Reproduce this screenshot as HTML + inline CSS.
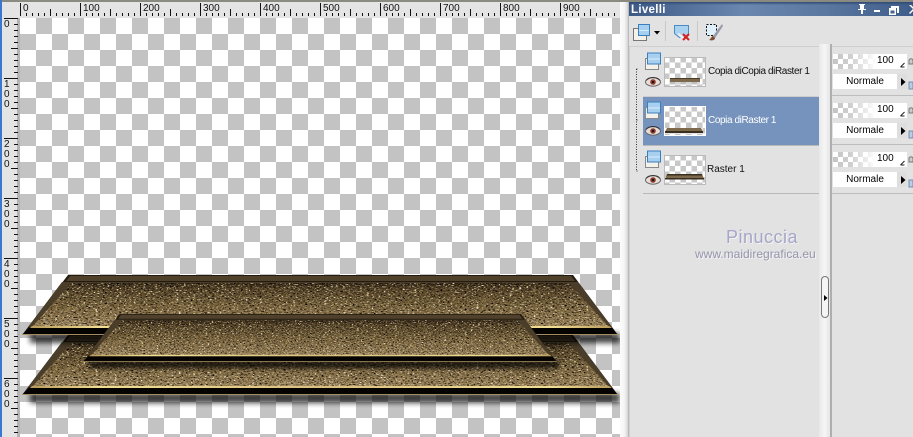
<!DOCTYPE html>
<html><head><meta charset="utf-8"><style>
html,body{margin:0;padding:0;background:#e2e2e2}
#r{position:relative;width:913px;height:437px;overflow:hidden;background:#e2e2e2;font-family:"Liberation Sans",sans-serif;color:#000}
#r div,#r svg{position:absolute}
.chk{background-color:#fff;background-image:conic-gradient(#c3c3c3 25%,#fff 25% 50%,#c3c3c3 50% 75%,#fff 75%);background-size:32px 32px;left:20px;top:18px;width:600px;height:419px;background-position:0 0}
.mini{background-color:#fff;background-image:conic-gradient(#c8c8c8 25%,#fff 25% 50%,#c8c8c8 50% 75%,#fff 75%);background-size:11px 11px}
.t{white-space:nowrap;font-size:10px;line-height:12px}
.sel{background:#7593bc}
.box{background:#fff}
.op{background-image:linear-gradient(90deg,rgba(255,255,255,0) 0,rgba(255,255,255,.2) 25%,#fff 58%),conic-gradient(#c4c4c4 25%,#fff 25% 50%,#c4c4c4 50% 75%,#fff 75%);background-size:100% 100%,10px 10px;background-color:#fff}
</style></head><body><div id="r">
<div style="left:0;top:0;width:913px;height:2px;background:#8a8a80"></div>
<div style="left:0;top:0;width:2px;height:437px;background:#3a78d0"></div>
<div style="left:2px;top:2px;width:618px;height:16px;background:#e4e4e4"></div>
<div style="left:2px;top:2px;width:18px;height:435px;background:#e4e4e4"></div>
<div style="left:17px;top:18px;width:3px;height:419px;background:#b4b4b4"></div>
<div class="chk"></div>

<svg style="left:20px;top:18px" width="600" height="419" viewBox="20 18 600 419">
<defs>
<linearGradient id="f" x1="0" y1="0" x2="0" y2="1"><stop offset="0" stop-color="#2b2216"/><stop offset=".14" stop-color="#4f4029"/><stop offset=".5" stop-color="#75623f"/><stop offset="1" stop-color="#a08a64"/></linearGradient>
<linearGradient id="y" x1="0" y1="0" x2="1" y2="0"><stop offset="0" stop-color="#b89a5a"/><stop offset=".12" stop-color="#f0de92"/><stop offset=".5" stop-color="#d8c080"/><stop offset=".9" stop-color="#f0de92"/><stop offset="1" stop-color="#b89a5a"/></linearGradient>
<filter id="n" x="0" y="0" width="1" height="1" color-interpolation-filters="sRGB">
<feTurbulence type="fractalNoise" baseFrequency="0.42 0.85" numOctaves="3" seed="7"/>
<feColorMatrix type="matrix" values="4 0 0 0 -1.55  4 0 0 0 -1.65  4 0 0 0 -1.85  0 3 0 0 -1.25"/>
<feComposite in2="SourceGraphic" operator="in"/>
</filter>
<filter id="b" x="-5%" y="-50%" width="110%" height="200%"><feGaussianBlur stdDeviation="2.6"/></filter>
<g id="p">
<rect x="8" y="58" width="590" height="10" fill="#000" opacity=".72" filter="url(#b)"/>
<polygon points="46,0 551,0 596,60 0,60" fill="#231b10"/>
<polygon points="48,1 549,1 553,6 44,6" fill="#4f412b"/>
<polygon points="40,7 556,7 590,52 6,52" fill="#4a3d29"/>
<polygon points="49,8 547,8 587,52 10,52" fill="url(#f)"/>
<polygon points="49,8 547,8 587,52 10,52" fill="#888" filter="url(#n)"/>
<polygon points="10,51 587,51 590,53 8,53" fill="url(#y)"/>
<polygon points="7,53 590,53 595,59 1,59" fill="#050302"/>
<rect x="0" y="59" width="596" height="1" fill="#a48d60"/>
</g>
</defs>
<use href="#p" transform="translate(22,335)"/>
<use href="#p" transform="translate(22,275)"/>
<use href="#p" transform="translate(83,314) scale(.795,.8)"/>
</svg>

<svg style="left:0;top:0" width="622" height="437" viewBox="0 0 622 437" font-family="Liberation Sans" font-size="10" fill="#111">
<defs>
<pattern id="hm" x="20" y="0" width="6" height="60" patternUnits="userSpaceOnUse"><rect x="0" y="0" width="1" height="60" fill="#111"/></pattern>
<pattern id="vm" x="0" y="18" width="60" height="6" patternUnits="userSpaceOnUse"><rect x="0" y="0" width="60" height="1" fill="#111"/></pattern>
</defs>
<rect x="20" y="13" width="600" height="3" fill="url(#hm)"/>
<rect x="14" y="18" width="4" height="419" fill="url(#vm)"/>
<g fill="#111">
<path d="M50 9h1v4h-1zM110 9h1v4h-1zM170 9h1v4h-1zM230 9h1v4h-1zM290 9h1v4h-1zM350 9h1v4h-1zM410 9h1v4h-1zM470 9h1v4h-1zM530 9h1v4h-1zM590 9h1v4h-1z"/>
<path d="M20 3h1v10h-1zM80 3h1v10h-1zM140 3h1v10h-1zM200 3h1v10h-1zM260 3h1v10h-1zM320 3h1v10h-1zM380 3h1v10h-1zM440 3h1v10h-1zM500 3h1v10h-1zM560 3h1v10h-1z"/>
<path d="M11 48h7v1h-7zM11 108h7v1h-7zM11 168h7v1h-7zM11 228h7v1h-7zM11 288h7v1h-7zM11 348h7v1h-7zM11 408h7v1h-7z"/>
<path d="M4 18h14v1H4zM4 78h14v1H4zM4 138h14v1H4zM4 198h14v1H4zM4 258h14v1H4zM4 318h14v1H4zM4 378h14v1H4z"/>
</g>
<text x="23" y="11">0</text><text x="83" y="11">100</text><text x="143" y="11">200</text><text x="203" y="11">300</text><text x="263" y="11">400</text><text x="323" y="11">500</text><text x="383" y="11">600</text><text x="443" y="11">700</text><text x="503" y="11">800</text><text x="563" y="11">900</text>
<text x="4" y="27">0</text>
<text x="4" y="87">1</text><text x="4" y="97">0</text><text x="4" y="107">0</text>
<text x="4" y="147">2</text><text x="4" y="157">0</text><text x="4" y="167">0</text>
<text x="4" y="207">3</text><text x="4" y="217">0</text><text x="4" y="227">0</text>
<text x="4" y="267">4</text><text x="4" y="277">0</text><text x="4" y="287">0</text>
<text x="4" y="327">5</text><text x="4" y="337">0</text><text x="4" y="347">0</text>
<text x="4" y="387">6</text><text x="4" y="397">0</text><text x="4" y="407">0</text>
</svg>

<div style="left:620px;top:0;width:9px;height:437px;background:linear-gradient(90deg,#fbfbfb 0,#f4f4f4 50%,#d8d8d8 85%,#a8a8a8 100%)"></div>
<div style="left:620px;top:0;width:9px;height:2px;background:#8a8a80"></div>

<div style="left:629px;top:2px;width:284px;height:14px;background:linear-gradient(90deg,#3d5a86 0,#6a87b0 40%,#5a779f 70%,#3f5d8a 100%)"></div>
<div style="left:629px;top:2px;width:284px;height:3px;background:linear-gradient(180deg,#2f4a74,rgba(47,74,116,0))"></div>
<div class="t" style="left:631px;top:3px;font-size:11.500px;line-height:15px;font-weight:bold;color:#fff;letter-spacing:.3px">Livelli</div>
<svg style="left:855px;top:3px" width="58" height="12" viewBox="0 0 58 12" fill="#fff">
<path d="M4 1h6v1H9v4h2v1H8v4H6V7H3V6h2V2H4z"/>
<rect x="19" y="7" width="6" height="2"/>
<path d="M36 3h8v7h-2V5h-6zM34 5h7v7h-7zM35.500 7.500v3h4v-3z" fill-rule="evenodd"/>
<path d="M54 2l2 0 2 2v2l-2-2-2-2zM54 10l4-4v2l-3 3z"/>
</svg>

<!-- toolbar -->
<div style="left:665px;top:21px;width:1px;height:20px;background:#c8c8c8"></div>
<div style="left:697px;top:21px;width:1px;height:20px;background:#c8c8c8"></div>
<svg style="left:632px;top:23px" width="30" height="19" viewBox="0 0 30 19">
<rect x="1.500" y="5.500" width="13" height="12" fill="#f4f1ea" stroke="#777"/>
<rect x="6.500" y="1.500" width="11" height="11" fill="#a6cff0" stroke="#3c7fbd"/>
<path d="M7 7.500l10 0" stroke="#d8ecfb"/>
<path d="M22 8h6l-3 3.500z" fill="#000"/>
</svg>
<svg style="left:673px;top:23px" width="20" height="19" viewBox="0 0 20 19">
<path d="M1.500 2.500h14v9l-3 3h-6l-5-4z" fill="#a9d2f0" stroke="#4c8cc4"/>
<path d="M4 11l4 4h4l-6-5z" fill="#eee"/>
<path d="M10 11l6 6M16 11l-6 6" stroke="#d42020" stroke-width="2"/>
</svg>
<svg style="left:705px;top:22px" width="20" height="20" viewBox="0 0 20 20">
<rect x="1.500" y="2.500" width="10" height="11" fill="#dff0fb" stroke="#111" stroke-dasharray="2 1.500"/>
<path d="M17 2L8 14l2 2L18 4z" fill="#9b9ba8"/>
<path d="M8 14c-2 1-2 3-4 4 3 1 6 0 6-2z" fill="#7a4a2a"/>
</svg>

<!-- list frame -->
<div style="left:629px;top:46px;width:190px;height:1px;background:#cfcfcf"></div>
<div style="left:629px;top:47px;width:1px;height:390px;background:#cfcfcf"></div>
<div class="sel" style="left:643px;top:97px;width:176px;height:48px"></div>
<div style="left:643px;top:96px;width:176px;height:1px;background:#cdcdcd"></div>
<div style="left:643px;top:145px;width:176px;height:1px;background:#b8b8b8"></div>
<div style="left:643px;top:193px;width:176px;height:1px;background:#b8b8b8"></div>

<svg style="left:634px;top:68px" width="6" height="104" viewBox="0 0 6 104"><path d="M2.500 1V103M2.500 1H5M2.500 103H5M2.500 52H5" stroke="#333" stroke-dasharray="1 1.500" fill="none"/></svg>

<!-- rows: icons -->
<svg style="left:644px;top:52px" width="18" height="36" viewBox="0 0 18 36">
<rect x="1.500" y="6.500" width="13" height="11" fill="#f4f1ea" stroke="#888"/><rect x="3.500" y="1" width="13" height="11" fill="#a6cff0" stroke="#3c7fbd"/><path d="M4 7h12" stroke="#dceefb"/>
<ellipse cx="9" cy="30" rx="7.500" ry="4.200" fill="#e8dcd6" stroke="#666"/><circle cx="9" cy="30" r="2.800" fill="#8a3a2c"/><circle cx="9" cy="30" r="1.100" fill="#111"/><path d="M2 28.500c3-4 11-4 14 0" stroke="#333" fill="none"/>
</svg>
<svg style="left:644px;top:101px" width="18" height="36" viewBox="0 0 18 36">
<rect x="1.500" y="6.500" width="13" height="11" fill="#f4f1ea" stroke="#888"/><rect x="3.500" y="1" width="13" height="11" fill="#a6cff0" stroke="#3c7fbd"/><path d="M4 7h12" stroke="#dceefb"/>
<ellipse cx="9" cy="30" rx="7.500" ry="4.200" fill="#e8dcd6" stroke="#666"/><circle cx="9" cy="30" r="2.800" fill="#8a3a2c"/><circle cx="9" cy="30" r="1.100" fill="#111"/><path d="M2 28.500c3-4 11-4 14 0" stroke="#333" fill="none"/>
</svg>
<svg style="left:644px;top:150px" width="18" height="36" viewBox="0 0 18 36">
<rect x="1.500" y="6.500" width="13" height="11" fill="#f4f1ea" stroke="#888"/><rect x="3.500" y="1" width="13" height="11" fill="#a6cff0" stroke="#3c7fbd"/><path d="M4 7h12" stroke="#dceefb"/>
<ellipse cx="9" cy="30" rx="7.500" ry="4.200" fill="#e8dcd6" stroke="#666"/><circle cx="9" cy="30" r="2.800" fill="#8a3a2c"/><circle cx="9" cy="30" r="1.100" fill="#111"/><path d="M2 28.500c3-4 11-4 14 0" stroke="#333" fill="none"/>
</svg>

<!-- thumbnails -->
<div class="mini" style="left:664px;top:57px;width:42px;height:30px;box-shadow:0 0 0 1px #bbb inset"></div>
<svg style="left:664px;top:57px" width="42" height="30" viewBox="0 0 42 30"><rect x="6" y="21" width="30" height="1" fill="#4a3c27"/><rect x="6" y="22" width="30" height="3" fill="#7d6a4c"/><rect x="6" y="25" width="30" height="2" fill="#bbb" opacity=".6"/></svg>
<div class="mini" style="left:664px;top:106px;width:42px;height:30px;box-shadow:0 0 0 1px #fff inset"></div>
<svg style="left:664px;top:106px" width="42" height="30" viewBox="0 0 42 30"><path d="M3 22h34l2 4H1z" fill="#7d6a4c"/><rect x="1" y="25" width="38" height="2" fill="#3a2e1e"/></svg>
<div class="mini" style="left:664px;top:155px;width:42px;height:30px;box-shadow:0 0 0 1px #bbb inset"></div>
<svg style="left:664px;top:155px" width="42" height="30" viewBox="0 0 42 30"><path d="M3 19h35l2 5H1z" fill="#7d6a4c"/><rect x="3" y="19" width="35" height="1.500" fill="#3a2e1e"/><rect x="1" y="23" width="39" height="1.500" fill="#3a2e1e"/></svg>

<div class="t" style="left:708px;top:66px;color:#111;font-size:10px;letter-spacing:-.4px">Copia diCopia diRaster 1</div>
<div class="t" style="left:708px;top:115px;color:#fff;font-size:10px;letter-spacing:-.4px">Copia diRaster 1</div>
<div class="t" style="left:707px;top:164px;color:#111;font-size:10px">Raster 1</div>

<!-- watermark -->
<div class="t" style="left:726px;top:227px;font-size:18px;line-height:21px;color:#a6a6c8;letter-spacing:.5px;text-shadow:1px 1px 0 #f2f2f2">Pinuccia</div>
<div class="t" style="left:695px;top:248px;font-size:12px;line-height:13px;color:#9494ac;text-shadow:1px 1px 0 #f2f2f2">www.maidiregrafica.eu</div>

<!-- divider -->
<div style="left:819px;top:44px;width:11px;height:393px;background:linear-gradient(90deg,#e8e8e8,#f6f6f6 50%,#e6e6e6)"></div>
<div style="left:830px;top:44px;width:2px;height:393px;background:#aeaeae"></div>
<div style="left:821px;top:276px;width:6px;height:40px;background:#f4f4f4;border:1px solid #777;border-radius:4px"></div>
<svg style="left:824px;top:295px" width="4" height="6" viewBox="0 0 4 6"><path d="M0 0l3.500 3L0 6z" fill="#000"/></svg>

<!-- right column rows -->
<div style="left:832px;top:46px;width:81px;height:1px;background:#cfcfcf"></div>
<div class="op" style="left:833px;top:54px;width:74px;height:15px"></div>
<div class="t" style="left:877px;top:55px;font-size:10px">100</div>
<div class="box t" style="left:833px;top:74px;width:64px;height:15px;line-height:15px;text-align:center;font-size:10px">Normale</div>
<div style="left:897px;top:74px;width:10px;height:15px;background:#dedede"></div>
<svg style="left:901px;top:78px" width="5" height="8"><path d="M0 0l4.500 4L0 8z" fill="#000"/></svg>
<div style="left:832px;top:95px;width:81px;height:1px;background:#bdbdbd"></div>

<div class="op" style="left:833px;top:103px;width:74px;height:15px"></div>
<div class="t" style="left:877px;top:104px;font-size:10px">100</div>
<div class="box t" style="left:833px;top:123px;width:64px;height:15px;line-height:15px;text-align:center;font-size:10px">Normale</div>
<div style="left:897px;top:123px;width:10px;height:15px;background:#dedede"></div>
<svg style="left:901px;top:127px" width="5" height="8"><path d="M0 0l4.500 4L0 8z" fill="#000"/></svg>
<div style="left:832px;top:144px;width:81px;height:1px;background:#bdbdbd"></div>

<div class="op" style="left:833px;top:152px;width:74px;height:15px"></div>
<div class="t" style="left:877px;top:153px;font-size:10px">100</div>
<div class="box t" style="left:833px;top:172px;width:64px;height:15px;line-height:15px;text-align:center;font-size:10px">Normale</div>
<div style="left:897px;top:172px;width:10px;height:15px;background:#dedede"></div>
<svg style="left:901px;top:176px" width="5" height="8"><path d="M0 0l4.500 4L0 8z" fill="#000"/></svg>
<div style="left:832px;top:193px;width:81px;height:1px;background:#bdbdbd"></div>

<svg style="left:899px;top:54px" width="14" height="140" viewBox="0 0 14 140" fill="none">
<g><path d="M1.500 13l4-4M1.500 13h4" stroke="#222"/><path d="M10 6a2.500 3 0 0 1 4 0v4h-4z" stroke="#777" fill="#ccc"/><rect x="10" y="28" width="4" height="7" fill="#b8cde6" stroke="#7a8ca8"/></g>
<g transform="translate(0,49)"><path d="M1.500 13l4-4M1.500 13h4" stroke="#222"/><path d="M10 6a2.500 3 0 0 1 4 0v4h-4z" stroke="#777" fill="#ccc"/><rect x="10" y="28" width="4" height="7" fill="#b8cde6" stroke="#7a8ca8"/></g>
<g transform="translate(0,98)"><path d="M1.500 13l4-4M1.500 13h4" stroke="#222"/><path d="M10 6a2.500 3 0 0 1 4 0v4h-4z" stroke="#777" fill="#ccc"/><rect x="10" y="28" width="4" height="7" fill="#b8cde6" stroke="#7a8ca8"/></g>
</svg>
</div></body></html>
